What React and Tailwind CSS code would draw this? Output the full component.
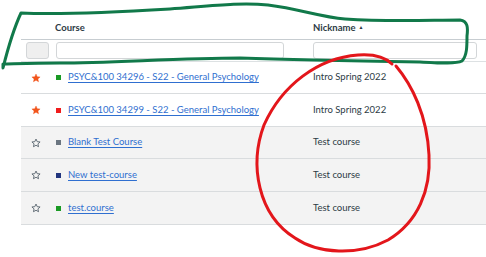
import React from 'react';

const courses = [
  { name: 'PSYC&100 34296 - S22 - General Psychology', nick: 'Intro Spring 2022', fav: true, color: 'bg-[#1a9a24]', h: 'h-[32px]', shaded: false },
  { name: 'PSYC&100 34299 - S22 - General Psychology', nick: 'Intro Spring 2022', fav: true, color: 'bg-[#f01c1c]', h: 'h-[33px]', shaded: false },
  { name: 'Blank Test Course', nick: 'Test course', fav: false, color: 'bg-[#6b7580]', h: 'h-[32px]', shaded: true },
  { name: 'New test-course', nick: 'Test course', fav: false, color: 'bg-[#22357e]', h: 'h-[33px]', shaded: true },
  { name: 'test.course', nick: 'Test course', fav: false, color: 'bg-[#1a9a24]', h: 'h-[33px]', shaded: true },
];

const Star = ({ filled }) => (
  <svg width="10" height="10" viewBox="0 0 24 24">
    <path
      d="M12 2.5l2.9 6.3 6.9.7-5.2 4.6 1.5 6.8L12 17.4l-6.1 3.5 1.5-6.8-5.2-4.6 6.9-.7z"
      fill={filled ? '#f2561d' : 'none'}
      stroke={filled ? '#f2561d' : '#5a6670'}
      strokeWidth={filled ? 1 : 2.2}
      strokeLinejoin="round"
    />
  </svg>
);

export default function App() {
  return (
    <div className="relative w-[486px] h-[257px] bg-white overflow-hidden font-['Lato','Liberation_Sans',sans-serif] text-[9.5px] text-[#2d3b45]">
      {/* Table */}
      <div className="ml-[21px]">
        {/* Header */}
        <div className="flex items-end h-[40px] pb-[4px] border-b border-[#c7cdd1] font-bold">
          <div className="w-[34px]" />
          <div className="w-[258px]">Course</div>
          <div className="flex items-center gap-[3px]">
            Nickname
            <span className="text-[5px] leading-none">▲</span>
          </div>
        </div>

        {/* Filters */}
        <div className="flex items-center h-[22px] border-b border-[#dde1e3]">
          <div className="w-[35px] pl-[5px]">
            <div className="w-[23px] h-[17px] bg-[#efefef] border border-[#d3d6d8] rounded-[3px]" />
          </div>
          <div className="w-[257px]">
            <div className="w-[228px] h-[17px] bg-white border border-[#d3d6d8] rounded-[3px]" />
          </div>
          <div className="w-[164px] h-[17px] bg-white border border-[#d3d6d8] rounded-[3px]" />
        </div>

        {/* Rows */}
        {courses.map((c) => (
          <div
            key={c.name}
            className={`flex items-center ${c.h} border-b border-[#d9dcde] ${c.shaded ? 'bg-[#f3f3f3]' : 'bg-white'}`}
          >
            <div className="w-[35px] flex justify-center pr-[5px]">
              <Star filled={c.fav} />
            </div>
            <div className="w-[257px] flex items-center gap-[7px]">
              <span className={`w-[5px] h-[5px] ${c.color}`} />
              <a href="#" className="text-[#2f6fd0] underline underline-offset-2">
                {c.name}
              </a>
            </div>
            <div>{c.nick}</div>
          </div>
        ))}
      </div>

      {/* Annotations */}
      <svg className="absolute inset-0 pointer-events-none" width="486" height="257" viewBox="0 0 486 257">
        <path
          d="M3 68 C8 48 14 28 21 13 C60 15 120 12 170 9 C210 6 240 2 268 5 C300 9 320 17 345 19 C390 22 430 20 460 20 C468 21 468 28 467 36 C467 46 467 56 462 61 C456 64 440 63 420 62 C360 61 300 60 240 58 C180 58 110 63 60 63 C30 63 10 64 3 64 Z"
          fill="none"
          stroke="#11794a"
          strokeWidth="3"
          strokeLinejoin="round"
        />
        <path
          d="M392 64 C385 57 372 54 358 55 C318 58 282 85 264 125 C249 165 258 215 295 238 C318 254 358 256 388 240 C418 222 431 190 429 155 C427 115 412 85 396 66"
          fill="none"
          stroke="#e3161b"
          strokeWidth="3"
          strokeLinecap="round"
        />
      </svg>
    </div>
  );
}
